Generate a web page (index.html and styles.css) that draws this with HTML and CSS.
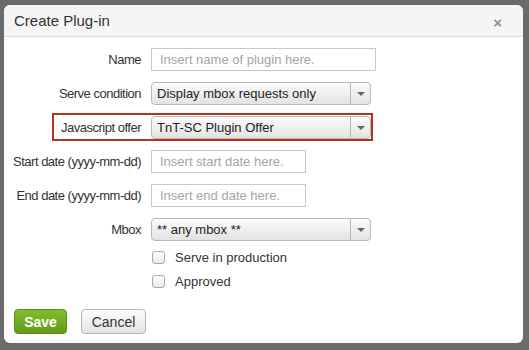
FILE: index.html
```html
<!DOCTYPE html>
<html lang="en">
<head>
  <meta charset="UTF-8">
  <title>Create Plug-in</title>
  <link rel="stylesheet" href="styles.css">
</head>
<body>
  <div class="modal">
    <div class="modal-header">
      <h3>Create Plug-in</h3>
      <span class="close">&times;</span>
    </div>
    <form class="modal-body">
      <div class="row">
        <label>Name</label>
        <input type="text" class="text-input wide" placeholder="Insert name of plugin here.">
      </div>
      <div class="row">
        <label>Serve condition</label>
        <div class="select"><span>Display mbox requests only</span><i class="caret"></i></div>
      </div>
      <div class="row highlight">
        <label>Javascript offer</label>
        <div class="select"><span>TnT-SC Plugin Offer</span><i class="caret"></i></div>
      </div>
      <div class="row">
        <label>Start date (yyyy-mm-dd)</label>
        <input type="text" class="text-input" placeholder="Insert start date here.">
      </div>
      <div class="row">
        <label>End date (yyyy-mm-dd)</label>
        <input type="text" class="text-input" placeholder="Insert end date here.">
      </div>
      <div class="row">
        <label>Mbox</label>
        <div class="select"><span>** any mbox **</span><i class="caret"></i></div>
      </div>
      <div class="check first"><span class="box"></span>Serve in production</div>
      <div class="check"><span class="box"></span>Approved</div>
      <div class="footer">
        <button type="button" class="btn save">Save</button>
        <button type="button" class="btn cancel">Cancel</button>
      </div>
    </form>
  </div>
</body>
</html>
```

FILE: styles.css
```css
body {
  margin: 0;
  height: 350px;
  background-color: #6b6b6b;
  font-family: "Liberation Sans", Arial, sans-serif;
  font-size: 13px;
  color: #333;
  padding: 5px 6px 0 4px;
  box-sizing: border-box;
}
.modal {
  width: 519px;
  height: 338px;
  background-color: #fff;
  border-radius: 6px;
  overflow: hidden;
}
.modal-header {
  height: 31px;
  background-color: #f5f5f5;
  border-bottom: 1px solid #dcdcdc;
  display: flex;
  align-items: center;
  justify-content: space-between;
  padding: 0 21px 0 10px;
}
.modal-header h3 {
  margin: 0;
  font-size: 15px;
  font-weight: normal;
  color: #333;
}
.close {
  font-size: 15px;
  font-weight: bold;
  color: #8e8e8e;
  margin-top: 3px;
}
.modal-body {
  margin: 0;
  padding: 11px 0 0 0;
}
.row {
  display: flex;
  align-items: center;
  height: 23px;
  margin-bottom: 11px;
  position: relative;
}
.row label {
  width: 137px;
  flex: none;
  display: flex;
  justify-content: flex-end;
  white-space: nowrap;
  letter-spacing: -0.5px;
  padding-right: 10px;
  box-sizing: content-box;
}
.row.highlight::before {
  content: "";
  position: absolute;
  left: 48px;
  top: -3px;
  width: 317px;
  height: 24px;
  border: 2px solid #b5321e;
}
.text-input {
  width: 155px;
  height: 23px;
  box-sizing: border-box;
  border: 1px solid #c8c8c8;
  padding: 0 8px;
  font-family: inherit;
  font-size: 13px;
  color: #333;
  margin: 0;
}
.text-input.wide {
  width: 225px;
}
.text-input::placeholder {
  color: #a5a5a5;
}
.select {
  width: 220px;
  height: 23px;
  box-sizing: border-box;
  border: 1px solid #b8b8b8;
  border-radius: 4px;
  background: linear-gradient(#fbfbfb, #e3e3e3);
  display: flex;
  align-items: center;
  padding-left: 5px;
  color: #222;
}
.select span {
  flex: 1;
}
.caret {
  width: 19px;
  height: 100%;
  border-left: 1px solid #b8b8b8;
  display: flex;
  align-items: center;
  justify-content: center;
}
.caret::after {
  content: "";
  border-left: 4px solid transparent;
  border-right: 4px solid transparent;
  border-top: 4px solid #666;
}
.check {
  display: flex;
  align-items: center;
  height: 18px;
  margin: 0 0 6px 148px;
  color: #333;
}
.check.first {
  margin-top: -4px;
}
.box {
  width: 11px;
  height: 11px;
  border: 1px solid #aaa;
  border-radius: 3px;
  background: linear-gradient(#fff, #e8e8e8);
  margin-right: 10px;
}
.footer {
  display: flex;
  gap: 14px;
  padding: 13px 0 0 10px;
}
.btn {
  height: 25px;
  border-radius: 4px;
  font-family: inherit;
  font-size: 14px;
  padding: 0;
  margin: 0;
}
.save {
  width: 53px;
  border: 1px solid #5a8f14;
  background: linear-gradient(#82bd2c, #629c17);
  color: #fff;
  font-weight: bold;
}
.cancel {
  width: 65px;
  border: 1px solid #b5b5b5;
  background: linear-gradient(#fdfdfd, #e4e4e4);
  color: #333;
}
```
